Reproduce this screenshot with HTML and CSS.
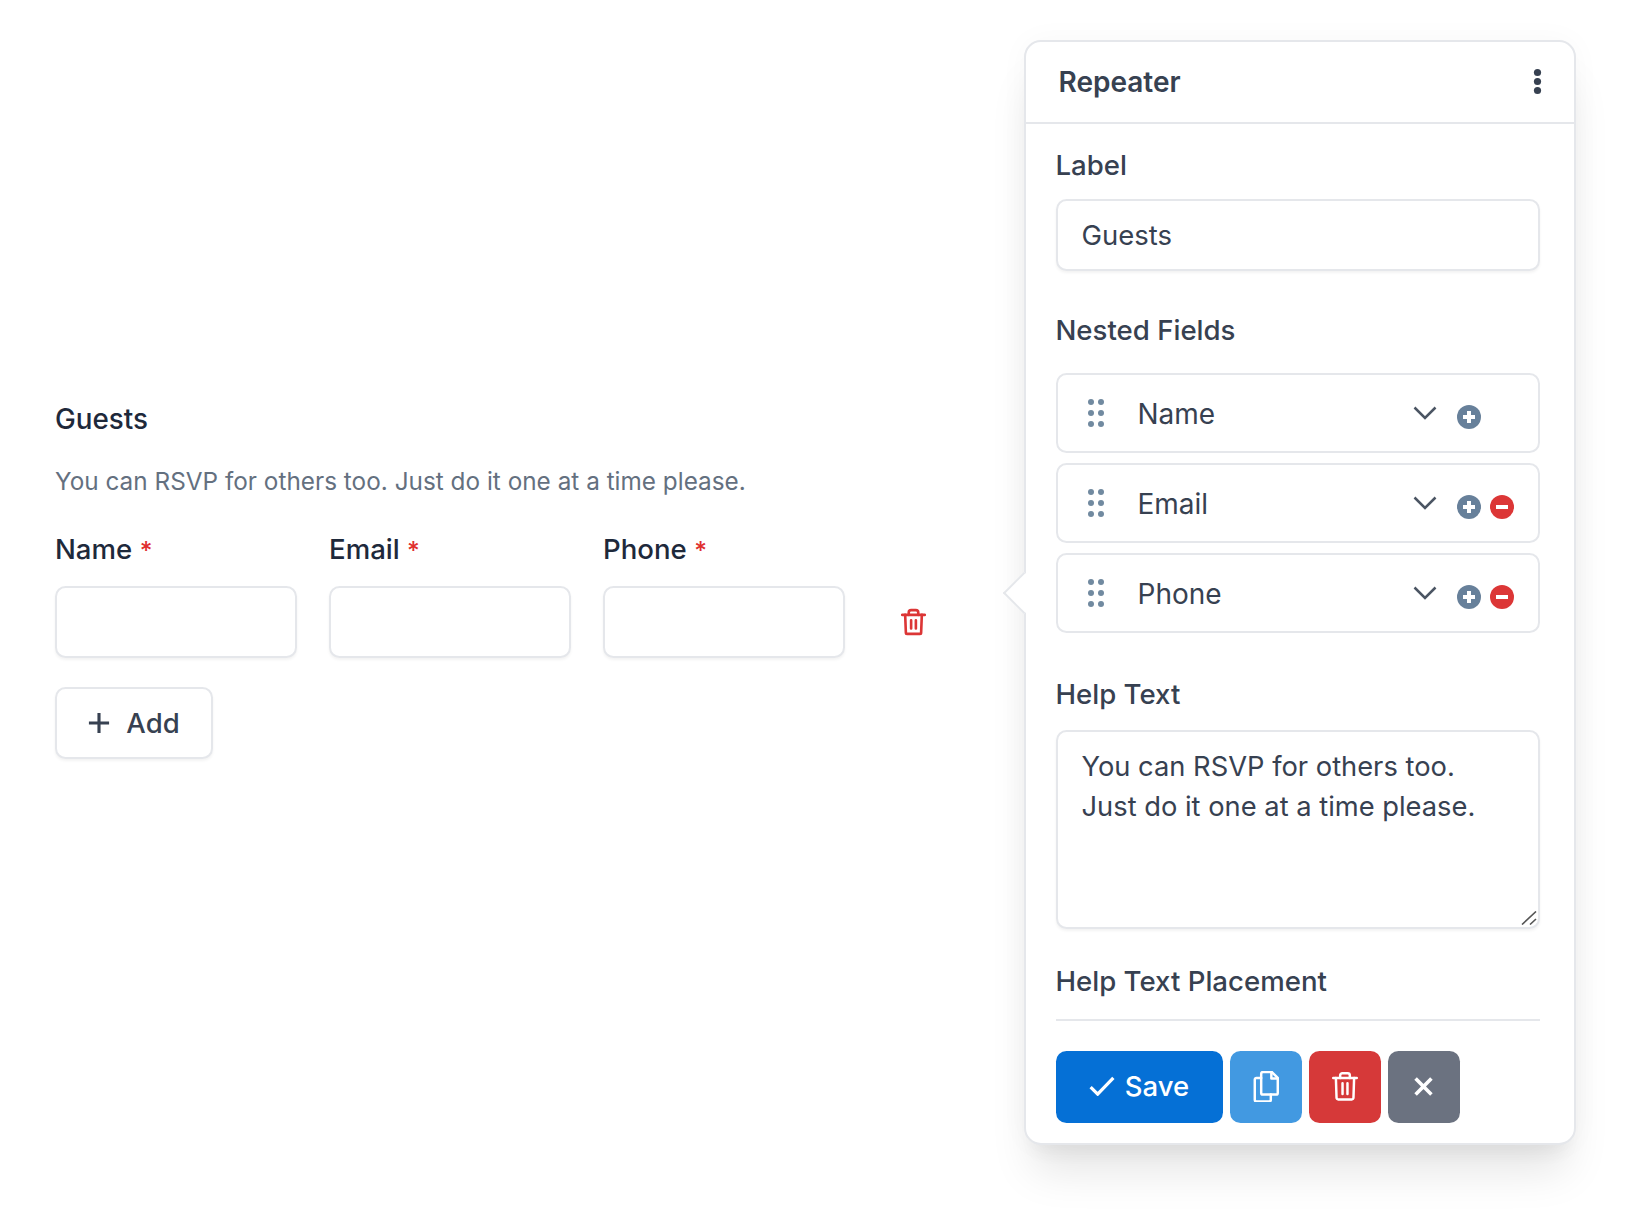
FILE: index.html
```html
<!DOCTYPE html>
<html lang="en">
<head>
<meta charset="utf-8">
<title>Repeater</title>
<link rel="stylesheet" href="styles.css">
</head>
<body>
<main class="page">
  <section class="preview">
    <h2 class="preview-title">Guests</h2>
    <p class="preview-help">You can RSVP for others too. Just do it one at a time please.</p>
    <div class="repeat-row">
      <div class="col"><label class="col-label">Name <span class="req">*</span></label><input class="field" type="text"></div>
      <div class="col"><label class="col-label">Email <span class="req">*</span></label><input class="field" type="text"></div>
      <div class="col"><label class="col-label">Phone <span class="req">*</span></label><input class="field" type="text"></div>
      <svg class="row-trash" viewBox="1.5 1 21 22"><path d="M2.5 6h19"/><path d="M5 6l.6 15a1 1 0 0 0 1 1h10.8a1 1 0 0 0 1-1L19 6"/><path d="M8 6V4a2 2 0 0 1 2-2h4a2 2 0 0 1 2 2v2"/><path d="M10 10.5v7M14 10.5v7"/></svg>
    </div>
    <button class="add-btn" type="button"><svg class="add-icon" viewBox="0 0 24 24"><path d="M12 1v22M1 12h22"/></svg>Add</button>
  </section>

  <aside class="panel">
    <span class="panel-arrow"></span>
    <header class="panel-head">
      <h3 class="panel-title">Repeater</h3>
      <svg class="kebab" viewBox="0 0 10 28"><circle cx="5" cy="4" r="4"/><circle cx="5" cy="14" r="4"/><circle cx="5" cy="24" r="4"/></svg>
    </header>
    <div class="panel-body">
      <label class="p-label first">Label</label>
      <input class="field wide" type="text" value="Guests">

      <div class="p-label nested">Nested Fields</div>
      <ul class="rows">
        <li class="row">
          <svg class="grip" viewBox="0 0 16 28"><circle cx="3" cy="3" r="3"/><circle cx="13" cy="3" r="3"/><circle cx="3" cy="14" r="3"/><circle cx="13" cy="14" r="3"/><circle cx="3" cy="25" r="3"/><circle cx="13" cy="25" r="3"/></svg>
          <span class="row-name">Name</span>
          <svg class="chev" viewBox="0 0 24 14"><path d="M1.5 1.5L12 12 22.5 1.5"/></svg>
          <svg class="round plus" viewBox="0 0 24 24"><circle cx="12" cy="12" r="12"/><path d="M12 6v12M6 12h12"/></svg>
          <span class="round-slot"></span>
        </li>
        <li class="row">
          <svg class="grip" viewBox="0 0 16 28"><circle cx="3" cy="3" r="3"/><circle cx="13" cy="3" r="3"/><circle cx="3" cy="14" r="3"/><circle cx="13" cy="14" r="3"/><circle cx="3" cy="25" r="3"/><circle cx="13" cy="25" r="3"/></svg>
          <span class="row-name">Email</span>
          <svg class="chev" viewBox="0 0 24 14"><path d="M1.5 1.5L12 12 22.5 1.5"/></svg>
          <svg class="round plus" viewBox="0 0 24 24"><circle cx="12" cy="12" r="12"/><path d="M12 6v12M6 12h12"/></svg>
          <svg class="round minus" viewBox="0 0 24 24"><circle cx="12" cy="12" r="12"/><path d="M6 12h12"/></svg>
        </li>
        <li class="row">
          <svg class="grip" viewBox="0 0 16 28"><circle cx="3" cy="3" r="3"/><circle cx="13" cy="3" r="3"/><circle cx="3" cy="14" r="3"/><circle cx="13" cy="14" r="3"/><circle cx="3" cy="25" r="3"/><circle cx="13" cy="25" r="3"/></svg>
          <span class="row-name">Phone</span>
          <svg class="chev" viewBox="0 0 24 14"><path d="M1.5 1.5L12 12 22.5 1.5"/></svg>
          <svg class="round plus" viewBox="0 0 24 24"><circle cx="12" cy="12" r="12"/><path d="M12 6v12M6 12h12"/></svg>
          <svg class="round minus" viewBox="0 0 24 24"><circle cx="12" cy="12" r="12"/><path d="M6 12h12"/></svg>
        </li>
      </ul>

      <label class="p-label help">Help Text</label>
      <div class="area-wrap">
        <textarea class="area">You can RSVP for others too. Just do it one at a time please.</textarea>
        <svg class="grip-corner" viewBox="0 0 16 14"><path d="M1 13.5L15 .5M9 13.5L15 8"/></svg>
      </div>

      <div class="p-label placement">Help Text Placement</div>
      <hr class="rule">

      <div class="actions">
        <button class="act save" type="button"><svg class="check" viewBox="0 0 24 18"><path d="M1.5 10l6.5 6.5L22.5 1.5"/></svg>Save</button>
        <button class="act copy" type="button"><svg class="copy-icon" viewBox="0 0 24 29"><path d="M9 1h8.5L23 6.5v14a1.5 1.5 0 0 1-1.5 1.5H9a1.5 1.5 0 0 1-1.5-1.5v-18A1.5 1.5 0 0 1 9 1z"/><path d="M17 1v6h6"/><path d="M7.5 6.5H3A1.5 1.5 0 0 0 1.5 8v19A1.5 1.5 0 0 0 3 28.500h12a1.500 1.500 0 0 0 1.500-1.500V22"/></svg></button>
        <button class="act del" type="button"><svg class="act-icon" viewBox="0 0 24 28"><path d="M1 6.500h22"/><path d="M3.500 6.500l.6 18.500a1.500 1.500 0 0 0 1.500 1.500h12.800a1.500 1.500 0 0 0 1.500-1.500l.6-18.500"/><path d="M7.500 6.500V4a2 2 0 0 1 2-2h5a2 2 0 0 1 2 2v2.500"/><path d="M9.700 11.500v10M14.300 11.500v10"/></svg></button>
        <button class="act close" type="button"><svg class="x-icon" viewBox="0 0 18 18"><path d="M1.500 1.500l15 15M16.500 1.500l-15 15"/></svg></button>
      </div>
    </div>
  </aside>
</main>
</body>
</html>
```
FILE: styles.css
```css
* { box-sizing: border-box; }
html, body { margin: 0; background: #fff; }
body { font-family: Inter, "Noto Sans", sans-serif; color: #374151; }

.page {
  display: flex;
  align-items: flex-start;
  justify-content: space-between;
  width: 1640px;
  height: 1210px;
  padding: 40px 64px 0 55px;
}

/* left preview */
.preview { padding-top: 361px; width: 900px; }
.preview-title { margin: 0; font-size: 27.8px; line-height: 36px; font-weight: 450; color: #1e293b; }
.preview-help { margin: 26px 0 0; font-size: 24.3px; line-height: 36px; letter-spacing: .02px; color: #64707f; }
.repeat-row { display: flex; align-items: flex-end; gap: 32px; margin-top: 32px; }
.col { width: 242px; }
.col-label { display: block; font-size: 27.6px; line-height: 36px; font-weight: 450; color: #1e293b; }
.req { color: #e02f2f; font-size: 24.5px; }
.field {
  display: block;
  width: 100%;
  height: 72px;
  margin-top: 18px;
  border: 2px solid #e5e7eb;
  border-radius: 10.5px;
  background: #fff;
  box-shadow: 0 2px 3px rgba(0,0,0,.05);
  padding: 0 24px;
  font: 400 27.5px Inter, sans-serif;
  color: #374151;
  outline: none;
}
.row-trash {
  width: 25px; height: 28px;
  margin: 0 0 22px 24px;
  fill: none; stroke: #dc3636; stroke-width: 2.2; stroke-linecap: round; stroke-linejoin: round;
}
.add-btn {
  display: flex; align-items: center; justify-content: center; gap: 16px;
  width: 158px; height: 72px;
  margin-top: 29px;
  border: 2px solid #e5e7eb; border-radius: 10.5px;
  background: #fff;
  box-shadow: 0 2px 3px rgba(0,0,0,.05);
  font: 450 27.5px Inter, sans-serif; color: #374151;
}
.add-icon { width: 22px; height: 22px; fill: none; stroke: #374151; stroke-width: 3.4; }

/* panel */
.panel {
  position: relative;
  width: 552px;
  border: 2px solid #e5e7eb;
  border-radius: 17px;
  background: #fff;
  box-shadow: 0 35px 44px -9px rgba(0,0,0,.1), 0 17px 17px -9px rgba(0,0,0,.04), 0 0 30px rgba(0,0,0,.03);
}
.panel-arrow {
  position: absolute;
  left: -17px; top: 536px;
  width: 30px; height: 30px;
  background: #fff;
  border-left: 2px solid #e5e7eb;
  border-bottom: 2px solid #e5e7eb;
  transform: rotate(45deg);
}
.panel-head {
  position: relative;
  display: flex; align-items: center; justify-content: space-between;
  height: 82px;
  padding: 0 32px 0 32.5px;
  border-bottom: 2px solid #e5e7eb;
}
.panel-title { margin: 0; font-size: 28px; font-weight: 600; color: #374151; }
.kebab { width: 9px; height: 27px; margin-top: -2px; fill: #374151; }
.panel-body { position: relative; padding: 23px 34px 20px 29.5px; }
.p-label { display: block; font-size: 27.6px; line-height: 36px; font-weight: 450; color: #374151; }
.wide { margin-top: 16px; height: 72px; }
.p-label.nested { margin-top: 41px; }
.rows { list-style: none; margin: 25px 0 0; padding: 0; display: flex; flex-direction: column; gap: 10px; }
.row {
  display: flex; align-items: center;
  height: 80px;
  padding: 2px 24px 0 30px;
  border: 2px solid #e5e7eb; border-radius: 10.5px;
}
.grip { width: 16px; height: 28px; margin: -2px 34px 0 0; fill: #718aa0; }
.row-name { flex: 1; font-size: 28px; color: #374151; }
.chev { width: 24px; height: 14px; margin: -2px 20px 0 0; fill: none; stroke: #4b5563; stroke-width: 2.5; }
.round { width: 24px; height: 24px; margin-top: 6px; }
.round path { fill: none; stroke: #fff; stroke-width: 4; }
.plus { fill: #67809a; }
.minus { fill: #dc3636; margin-left: 9px; }
.round-slot { width: 24px; margin-left: 9px; }
.p-label.help { margin-top: 43px; }
.area-wrap { position: relative; margin-top: 18px; }
.area {
  display: block; width: 100%; height: 199px;
  padding: 15px 24px;
  border: 2px solid #e5e7eb; border-radius: 10.5px;
  box-shadow: 0 2px 3px rgba(0,0,0,.05);
  font: 400 27.3px/40px Inter, sans-serif; color: #374151;
  outline: none;
  resize: none;
}
.grip-corner {
  position: absolute; right: 3px; bottom: 4px;
  width: 16px; height: 14px;
  fill: none; stroke: #555; stroke-width: 1.6;
}
.p-label.placement { margin-top: 34px; }
.rule { height: 2px; margin: 20px 0 0; border: 0; background: #e5e7eb; }
.actions { display: flex; gap: 7px; margin-top: 30px; }
.act {
  display: flex; align-items: center; justify-content: center;
  width: 72px; height: 72px;
  padding: 0 0 2px; border: 0; border-radius: 10.5px;
  font: 450 27.5px Inter, sans-serif; color: #fff;
}
.save { width: 167px; background: #0570d6; gap: 10px; }
.copy { background: #4299e1; }
.del { background: #d63939; }
.close { background: #6b7280; }
.check { width: 26px; height: 20px; fill: none; stroke: #fff; stroke-width: 3; }
.act-icon { width: 26px; height: 30px; fill: none; stroke: #fff; stroke-width: 2.3; stroke-linecap: round; stroke-linejoin: round; }
.copy-icon { width: 26px; height: 31px; fill: none; stroke: #fff; stroke-width: 2.3; stroke-linecap: round; stroke-linejoin: round; }
.x-icon { width: 19px; height: 19px; fill: none; stroke: #fff; stroke-width: 3.4; }
```
